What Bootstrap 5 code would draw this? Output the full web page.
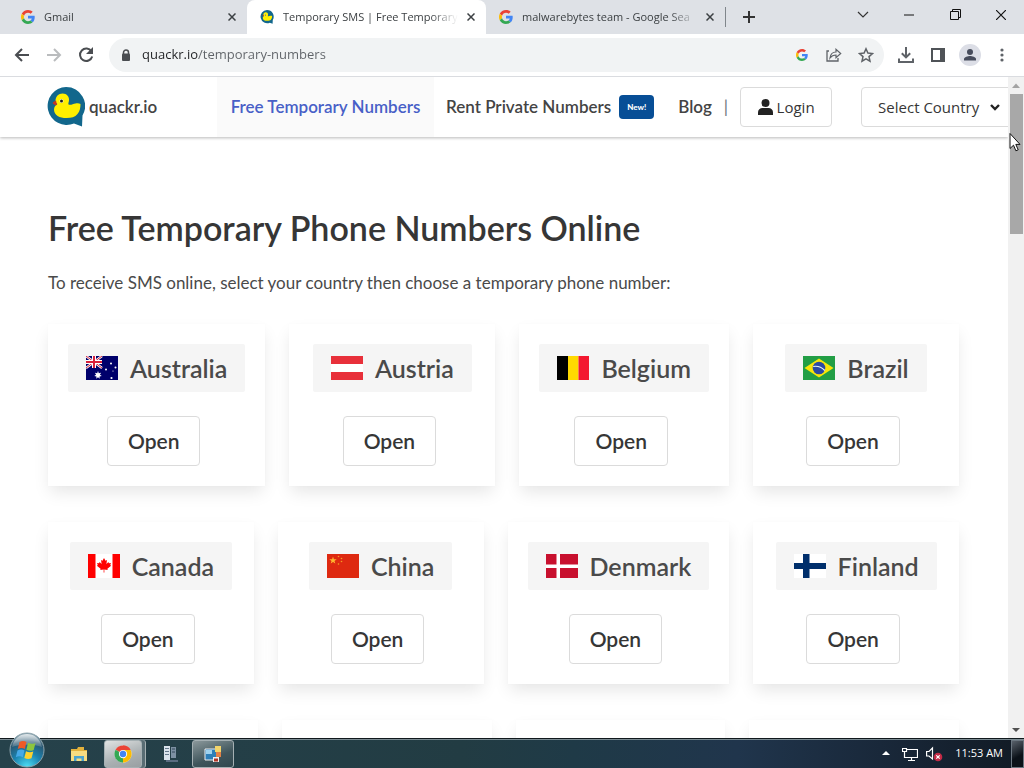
<!DOCTYPE html>
<html lang="en">
<head>
<meta charset="utf-8">
<meta name="viewport" content="width=device-width, initial-scale=1">
<title>Temporary SMS | Free Temporary Numbers</title>
<link href="https://cdn.jsdelivr.net/npm/bootstrap@5.3.0/dist/css/bootstrap.min.css" rel="stylesheet">
<style>
  :root { --ui: "Open Sans", "Noto Sans", sans-serif; --site: Lato, "Open Sans", sans-serif; }
  body { font-family: var(--ui); background: #fff; }
  button { font-family: inherit; }
  .plain { border: 0; background: none; padding: 0; display: flex; align-items: center; justify-content: center; flex: none; }

  /* browser tab strip */
  .tabstrip { background: #dee1e6; height: 34px; font-size: 11px; color: #3c4043; }
  .tab { flex: 0 1 239px; min-width: 0; padding: 0 11px 0 13px; gap: 9px; height: 34px; }
  .tab-on { background: #fff; border-radius: 8px 8px 0 0; }
  .tab-title { flex: 1 1 0; min-width: 0; overflow: hidden; white-space: nowrap; color: inherit; text-decoration: none;
    -webkit-mask-image: linear-gradient(90deg, #000 calc(100% - 28px), transparent); mask-image: linear-gradient(90deg, #000 calc(100% - 28px), transparent); }
  .tab-end { width: 1px; height: 20px; background: #80868b; }
  .win { width: 46px; height: 29px; }

  /* address bar */
  .toolbar { height: 43px; padding: 0 6px; border-bottom: 1px solid #dadce0; background: #fff; }
  .tool { width: 32px; height: 32px; }
  .omni { background: #f1f3f4; height: 34px; border-radius: 17px; margin: 0 6px 0 7px; padding: 0 2px 0 11px; }
  .omni input { flex: 1; min-width: 0; border: 0; outline: 0; padding: 0; margin-left: 10px; font-size: 13px;
    background: linear-gradient(90deg, #202124 56px, #5f6368 56px); -webkit-background-clip: text; background-clip: text; -webkit-text-fill-color: transparent; }

  /* site */
  .site { font-family: var(--site); color: #4a4a4a; }
  .site-head { height: 60px; padding-left: 47px; background: #fff; box-shadow: 0 1px 3px rgba(0,0,0,.28); font-size: 17px; font-weight: 600; white-space: nowrap; z-index: 2; }
  .site-head > * { flex: none; }
  .site-head a { color: #444; text-decoration: none; }
  .site-brand { width: 170px; gap: 4px; }
  .site-head a.nav-here { background: #fafafa; color: #485fc7; width: 217px; }
  .nav-new { background: #074e96; color: #fff; font-size: 8px; font-weight: 900; border-radius: 4px; width: 35px; height: 24px; }
  .box-btn { border: 1px solid #dbdbdb; border-radius: 4px; background-color: #fff; color: #363636; }
  .login { width: 92px; height: 40px; gap: 4px; font: 400 15px var(--ui); }
  .country { width: 166px; height: 40px; margin-left: 29px; padding: 0 0 0 16px; font: 400 15px var(--ui);
    --bs-form-select-bg-img: url("data:image/svg+xml,%3csvg xmlns='http://www.w3.org/2000/svg' viewBox='0 0 12 12'%3e%3cpath d='M2 4l4 4 4-4' fill='none' stroke='%23222' stroke-width='2.4'/%3e%3c/svg%3e");
    background-size: 12px 12px; background-position: right 25px center; }
  .site-main { padding: 68px 49px 0 48px; }
  .site-main h1 { font-size: 34px; line-height: 46px; font-weight: 600; color: #363636; margin: 0 0 19px; }
  .site-main p { font-size: 17px; line-height: 26px; margin: 0 0 28px; }
  .lands { gap: 24px; margin-bottom: 36px; }
  .land { flex: 1 1 0; padding: 20px; min-height: 162px; background: #fff; box-shadow: 0 8px 16px -2px rgba(10,10,10,.1), 0 0 1px rgba(10,10,10,.04); }
  .land h2 { background: #f5f5f5; width: fit-content; height: 48px; margin: 0 auto 24px; padding: 0 18px; gap: 12px; font-size: 25px; font-weight: 600; color: #4a4a4a; border-radius: 2px; }
  .flag { width: 32px; height: 24px; flex: none; }
  .open { height: 50px; margin-right: 6px; padding: 0 20px; font-size: 21px; font-weight: 600; line-height: 24px; }

  .scroll { width: 16px; flex: none; background: #f1f1f1; }
  .scroll svg { width: 16px; height: 17px; flex: none; }
  .thumb { width: 13px; height: 21.2%; background: #a8a8a8; }
  .pointer { top: 132px; right: 3px; z-index: 5; }

  /* taskbar */
  .taskbar { height: 30px; background: linear-gradient(90deg, #26424b 0, #223c43 45%, #1f3a47 56%, #20354c 72%, #19283a 86%, #111a24 100%); border-top: 1px solid #10191d; box-shadow: inset 0 1px #7b8b92; color: #fff; font-size: 11px; }
  .plain.orb { width: 54px; height: 29px; overflow: visible; align-items: flex-end; }
  .task { width: 42px; height: 28px; }
  .task-on { border: 1px solid #a5b0b3; border-radius: 3px; background: linear-gradient(160deg, #8b989b, #3f555b 60%, #31474e); }
  .task-front { background: linear-gradient(160deg, #e1e3e3, #a9b0b2 60%, #999fa2); box-shadow: 3px 0 #596d74, 4px 0 #a5b0b3; width: 38px; }
  .peek { width: 13px; height: 28px; border: 1px solid #6b7680; background: linear-gradient(150deg, #59616b, #0b1118 60%); }
</style>
</head>
<body class="vh-100 d-flex flex-column overflow-hidden position-relative">
<svg width="0" height="0" class="position-absolute" aria-hidden="true">
  <symbol id="g" viewBox="0 0 48 48"><path fill="#EA4335" d="M24 9.5c3.54 0 6.71 1.22 9.21 3.6l6.85-6.85C35.9 2.38 30.47 0 24 0 14.62 0 6.51 5.38 2.56 13.22l7.98 6.19C12.43 13.72 17.74 9.5 24 9.5z"/><path fill="#4285F4" d="M46.98 24.55c0-1.57-.15-3.09-.38-4.55H24v9.02h12.94c-.58 2.96-2.26 5.48-4.78 7.18l7.73 6c4.51-4.18 7.09-10.36 7.09-17.65z"/><path fill="#FBBC05" d="M10.53 28.59c-.48-1.45-.76-2.99-.76-4.59s.27-3.14.76-4.59l-7.98-6.19C.92 16.46 0 20.12 0 24c0 3.88.92 7.54 2.56 10.78l7.97-6.19z"/><path fill="#34A853" d="M24 48c6.48 0 11.93-2.13 15.89-5.81l-7.73-6c-2.15 1.45-4.92 2.3-8.16 2.3-6.26 0-11.57-4.22-13.47-9.91l-7.98 6.19C6.51 42.62 14.62 48 24 48z"/></symbol>
  <symbol id="duck" viewBox="0 0 38 40"><path fill="#12678c" d="M19 0a19 19 0 0 1 16.500 28.500L35 39.500 27 36.500A19 19 0 1 1 19 0z"/><path fill="#fff000" d="M8.500 14C8.500 9.500 11.500 6.500 15.500 6.500c4.500 0 7 3.500 6.500 7-.2 1.800-1 3-.5 4 2 1 4.500-.5 7-1 2.500-.4 4 0 5 .5 0 3.500-.5 7-3 10-2.500 3-6 4-11 4-7 0-12.500-2.500-12.500-8.500 0-2.500 1.500-4.500 3.500-5.500-1.300-.5-2-1.500-2-3z"/><path fill="#c33520" d="M9 13.500c-1.500.5-2.500 1.500-3.500 2.500 1 1.500 3 2.500 4.500 2z"/><circle cx="14.500" cy="14" r="2" fill="#f7f6da"/><circle cx="14.500" cy="14" r="1.500" fill="#222"/></symbol>
  <symbol id="x" viewBox="0 0 8 8"><path d="M.5.5l7 7M7.500.5l-7 7" stroke="#3c4043" stroke-width="1.500"/></symbol>
</svg>

<div class="tabstrip d-flex align-items-start ps-2 flex-shrink-0">
  <div class="tab d-flex align-items-center"><svg width="14" height="14"><use href="#g"/></svg><a class="tab-title" href="#">Gmail</a><button class="plain" aria-label="Close tab"><svg width="8" height="8"><use href="#x"/></svg></button></div>
  <div class="tab tab-on d-flex align-items-center"><svg width="14" height="14"><use href="#duck"/></svg><a class="tab-title" href="#">Temporary SMS | Free Temporary</a><button class="plain" aria-label="Close tab"><svg width="8" height="8"><use href="#x"/></svg></button></div>
  <div class="tab d-flex align-items-center"><svg width="14" height="14"><use href="#g"/></svg><a class="tab-title" href="#">malwarebytes team - Google Sea</a><button class="plain" aria-label="Close tab"><svg width="8" height="8"><use href="#x"/></svg></button></div>
  <span class="tab-end align-self-center"></span>
  <button class="plain win align-self-center" aria-label="New tab"><svg width="12" height="12"><path d="M6 0v12M0 6h12" stroke="#333" stroke-width="2"/></svg></button>
  <div class="d-flex ms-auto">
    <button class="plain win" aria-label="Search tabs"><svg width="12" height="8"><path d="M1 1l5 5 5-5" fill="none" stroke="#333" stroke-width="1.200"/></svg></button>
    <button class="plain win" aria-label="Minimise"><svg width="10" height="2"><path d="M0 1h10" stroke="#111"/></svg></button>
    <button class="plain win" aria-label="Restore"><svg width="11" height="11"><path d="M.5 2.500h8v8h-8zM2.500 2.500v-2h8v8h-2" fill="none" stroke="#111"/></svg></button>
    <button class="plain win" aria-label="Close"><svg width="10" height="10"><path d="M0 0l10 10M10 0L0 10" stroke="#111" stroke-width="1.200"/></svg></button>
  </div>
</div>

<div class="toolbar d-flex align-items-center flex-shrink-0">
  <button class="plain tool" aria-label="Back"><svg width="16" height="14"><path d="M15 7H2M8 1L2 7l6 6" fill="none" stroke="#4a4d51" stroke-width="2"/></svg></button>
  <button class="plain tool" aria-label="Forward"><svg width="16" height="14"><path d="M1 7h13M8 1l6 6-6 6" fill="none" stroke="#babcbe" stroke-width="2"/></svg></button>
  <button class="plain tool" aria-label="Reload"><svg width="16" height="16"><path d="M13.500 4.500A6.200 6.200 0 1 0 14.200 9.500" fill="none" stroke="#4a4d51" stroke-width="2"/><path d="M15 0v7H8z" fill="#4a4d51"/></svg></button>
  <div class="omni d-flex align-items-center flex-grow-1">
    <svg width="12" height="13" class="flex-shrink-0"><path d="M3.500 5V3.500a2.500 2.500 0 0 1 5 0V5" fill="none" stroke="#4a4d51" stroke-width="1.500"/><rect x="2" y="4.500" width="8" height="7.500" rx="1" fill="#4a4d51"/></svg>
    <input type="text" aria-label="Address" value="quackr.io/temporary-numbers">
    <button class="plain tool" aria-label="Search with Google"><svg width="12" height="12"><use href="#g"/></svg></button>
    <button class="plain tool" aria-label="Share"><svg width="16" height="14"><path d="M3 3H1v10h11v-3" fill="none" stroke="#5f6368" stroke-width="1.300"/><path d="M4 10c.5-4 3-6 6-6V1.300L14.700 5.500 10 9.700V7C7.500 7 5.500 8 4 10z" fill="none" stroke="#5f6368" stroke-width="1.200"/></svg></button>
    <button class="plain tool" aria-label="Bookmark"><svg width="16" height="16"><path d="M8 1.800l1.900 4.300 4.600.4-3.500 3.100 1 4.600L8 11.800l-4 2.400 1-4.600L1.500 6.500l4.600-.4z" fill="none" stroke="#5f6368" stroke-width="1.500"/></svg></button>
  </div>
  <button class="plain tool" aria-label="Downloads"><svg width="16" height="16"><path d="M8 0v10M3.800 6.200L8 10.400l4.200-4.200M1 11.500V15h14v-3.500" fill="none" stroke="#5f6368" stroke-width="2"/></svg></button>
  <button class="plain tool" aria-label="Side panel"><svg width="14" height="14"><path d="M1 1h12v12H1z" fill="none" stroke="#4f5357" stroke-width="2"/><path d="M9 1h4v12H9z" fill="#4f5357"/></svg></button>
  <button class="plain tool" aria-label="Profile"><svg width="22" height="22"><circle cx="11" cy="11" r="11" fill="#dcdee6"/><circle cx="11" cy="8" r="3" fill="#474c5c"/><path d="M5 16.500v-1.500c0-2 4-3 6-3s6 1 6 3v1.500z" fill="#474c5c"/></svg></button>
  <button class="plain tool" aria-label="Menu"><svg width="4" height="14"><g fill="#5f6368"><circle cx="2" cy="2" r="1.600"/><circle cx="2" cy="7" r="1.600"/><circle cx="2" cy="12" r="1.600"/></g></svg></button>
</div>

<div class="d-flex flex-grow-1 overflow-hidden">
  <div class="site flex-grow-1 overflow-hidden d-flex flex-column">
    <nav class="site-head d-flex align-items-center position-relative flex-shrink-0 overflow-visible">
      <a class="site-brand d-flex align-items-center" href="#"><svg width="38" height="40"><use href="#duck"/></svg>quackr.io</a>
      <a class="nav-here h-100 d-flex align-items-center justify-content-center" href="#">Free Temporary Numbers</a>
      <a class="ms-2 ps-1" href="#">Rent Private Numbers</a>
      <a href="#" class="nav-new d-flex align-items-center justify-content-center ms-2 me-4 text-white">New!</a>
      <a href="#">Blog</a>
      <span class="px-2 mx-1 fw-normal text-secondary">|</span>
      <button class="box-btn login d-flex align-items-center justify-content-center"><svg width="15" height="16"><circle cx="7.500" cy="4" r="4" fill="#222"/><path d="M0 16v-2.500C0 10.500 2 9 4.500 9h6c2.500 0 4.500 1.500 4.500 4.500V16z" fill="#222"/></svg>Login</button>
      <select class="form-select box-btn country" aria-label="Select Country"><option>Select Country</option></select>
    </nav>
    <main class="site-main">
      <h1>Free Temporary Phone Numbers Online</h1>
      <p>To receive SMS online, select your country then choose a temporary phone number:</p>
      <div class="lands d-flex">
        <section class="land"><h2 class="d-flex align-items-center"><svg class="flag" viewBox="0 0 32 24"><path fill="#00006b" d="M0 0h32v24H0z"/><path d="M0 0l16 12M16 0L0 12" stroke="#fff" stroke-width="2.400"/><path d="M0 0l16 12M16 0L0 12" stroke="#d8203a" stroke-width="1"/><path d="M8 0v12M0 6h16" stroke="#fff" stroke-width="4"/><path d="M8 0v12M0 6h16" stroke="#d8203a" stroke-width="2"/><path fill="#fff" d="M12 15l.8 2.200 2.300-.5-1.200 2 1.900 1.300-2.300.4.200 2.300-1.700-1.500-1.700 1.500.2-2.300-2.300-.4 1.900-1.300-1.200-2 2.300.5z"/><g fill="#fff"><circle cx="25" cy="7.500" r="1"/><circle cx="20" cy="13.500" r="1"/><circle cx="29.500" cy="11.500" r="1"/><circle cx="25.500" cy="22" r="1.100"/><circle cx="27" cy="15" r=".6"/></g></svg>Australia</h2><div class="text-center"><button class="box-btn open">Open</button></div></section>
        <section class="land"><h2 class="d-flex align-items-center"><svg class="flag" viewBox="0 0 32 24"><path fill="#fff" d="M0 0h32v24H0z"/><path fill="#e8303a" d="M0 0h32v8H0zM0 16h32v8H0z"/></svg>Austria</h2><div class="text-center"><button class="box-btn open">Open</button></div></section>
        <section class="land"><h2 class="d-flex align-items-center"><svg class="flag" viewBox="0 0 32 24"><path d="M0 0h11v24H0z"/><path fill="#ffd900" d="M11 0h10.500v24H11z"/><path fill="#f31830" d="M21.500 0H32v24H21.500z"/></svg>Belgium</h2><div class="text-center"><button class="box-btn open">Open</button></div></section>
        <section class="land"><h2 class="d-flex align-items-center"><svg class="flag" viewBox="0 0 32 24"><path fill="#229e45" d="M0 0h32v24H0z"/><path fill="#f8e509" d="M16 2.500L30.500 12 16 21.500 1.500 12z"/><circle cx="16" cy="12" r="6.300" fill="#2b49a3"/><path d="M10.200 10.500c4-.8 8.500.8 11.600 4" fill="none" stroke="#e8f4f8" stroke-width="1.200"/></svg>Brazil</h2><div class="text-center"><button class="box-btn open">Open</button></div></section>
      </div>
      <div class="lands d-flex">
        <section class="land"><h2 class="d-flex align-items-center"><svg class="flag" viewBox="0 0 32 24"><path fill="#fff" d="M0 0h32v24H0z"/><path fill="#f00" d="M0 0h7.500v24H0zM24.500 0H32v24h-7.500zM16 4l1.500 2.800 1.500-.8-.6 4 2-2 .5 1.200 2.100-.3-.8 2.200.9.700-3.700 3 .3 1.300-3.400-.5.100 3h-.8l.1-3-3.400.5.300-1.300-3.700-3 .9-.7-.8-2.200 2.100.3.500-1.200 2 2-.6-4 1.500.8z"/></svg>Canada</h2><div class="text-center"><button class="box-btn open">Open</button></div></section>
        <section class="land"><h2 class="d-flex align-items-center"><svg class="flag" viewBox="0 0 32 24"><path fill="#de2910" d="M0 0h32v24H0z"/><path fill="#ffb52e" d="M6 2.500l.9 2.700h2.800L7.500 6.900l.8 2.700L6 7.900 3.700 9.600l.8-2.700-2.200-1.700h2.800z"/><g fill="#f49a25"><circle cx="11.500" cy="2.500" r=".8"/><circle cx="14.500" cy="4.500" r=".8"/><circle cx="14.500" cy="7.500" r=".8"/><circle cx="11.500" cy="10" r=".8"/></g></svg>China</h2><div class="text-center"><button class="box-btn open">Open</button></div></section>
        <section class="land"><h2 class="d-flex align-items-center"><svg class="flag" viewBox="0 0 32 24"><path fill="#c8102e" d="M0 0h32v24H0z"/><path fill="#fff" d="M10.500 0H14v24h-3.500zM0 10.500h32V14H0z"/></svg>Denmark</h2><div class="text-center"><button class="box-btn open">Open</button></div></section>
        <section class="land"><h2 class="d-flex align-items-center"><svg class="flag" viewBox="0 0 32 24"><path fill="#fff" d="M0 0h32v24H0z"/><path fill="#002f6c" d="M9 0h6.500v24H9zM0 9h32v6H0z"/></svg>Finland</h2><div class="text-center"><button class="box-btn open">Open</button></div></section>
      </div>
      <div class="lands d-flex">
        <section class="land"></section><section class="land"></section><section class="land"></section><section class="land"></section>
      </div>
    </main>
  </div>
  <div class="scroll d-flex flex-column align-items-center">
    <svg><path d="M8 6.500l4 4.500H4z" fill="#a3a3a3"/></svg>
    <div class="thumb mb-auto"></div>
    <svg><path d="M8 11l4-4H4z" fill="#505050"/></svg>
  </div>
</div>
<svg class="pointer position-absolute" width="12" height="20"><path d="M1 1.500v15l3.500-3.300 2.400 5.600 2.300-1-2.400-5.400H11z" fill="#fff" stroke="#111"/></svg>

<footer class="taskbar d-flex align-items-center flex-shrink-0 position-relative">
  <button class="plain orb" aria-label="Start"><svg width="36" height="36" viewBox="0 0 36 36" class="flex-shrink-0"><defs><radialGradient id="ob" cx=".5" cy="1" r=".95"><stop offset="0" stop-color="#4fe0f5"/><stop offset=".45" stop-color="#1b83b0"/><stop offset=".8" stop-color="#2a5670"/><stop offset="1" stop-color="#7f9ba8"/></radialGradient><linearGradient id="sh" x2="0" y2="1"><stop offset="0" stop-color="#fff" stop-opacity=".75"/><stop offset="1" stop-color="#fff" stop-opacity=".15"/></linearGradient></defs><circle cx="18" cy="18" r="17" fill="url(#ob)" stroke="#8fa5ae"/><path d="M3 15C5 6 11 2 18 2s13 4 15 13c-8-3-22-3-30 0z" fill="url(#sh)"/><path d="M10.500 10c2.500-1.500 5-1.200 7 0l-1.700 7c-2-1.200-4.500-1.300-7 0z" fill="#ee5a26"/><path d="M19 10.700c2.500 1.400 5 1.400 7.500.2l-1.800 7c-2.500 1.200-5 1.100-7.300-.2z" fill="#8dc63f"/><path d="M8.500 18.500c2.500-1.300 5-1.200 7 0l-1.700 6.700c-2.200-1.200-4.600-1.200-7 0z" fill="#45a9e8"/><path d="M17 19.300c2.500 1.300 5 1.300 7.300.2l-1.800 6.700c-2.300 1.100-4.700 1-7.200-.2z" fill="#fdd22f"/></svg></button>
  <button class="plain task ms-1" aria-label="File Explorer"><svg width="18" height="18"><path d="M1 4h6l1-2h6v3h3v11H1z" fill="#e2b13c"/><path d="M1 6h16v10H1z" fill="#f7dc81"/><path d="M4 16v-5h10v5h-2.500v-2.500h-5V16z" fill="#4aa3cf"/></svg></button>
  <button class="plain task task-on task-front ms-1" aria-label="Chrome"><svg width="18" height="18" viewBox="0 0 48 48"><circle cx="24" cy="24" r="23" fill="#fff"/><path d="M24 24L4.100 12.500A23 23 0 0 1 43.900 12.500z" fill="#ea4335"/><path d="M24 24L43.900 12.500A23 23 0 0 1 24 47z" fill="#fbbc04"/><path d="M24 24L24 47A23 23 0 0 1 4.100 12.500z" fill="#34a853"/><path d="M24 13h20.200L34 29z" fill="#fbbc04"/><path d="M24 13h20.200A23 23 0 0 0 24 1z" fill="#ea4335"/><circle cx="24" cy="24" r="11" fill="#fff"/><circle cx="24" cy="24" r="8.500" fill="#4285f4"/></svg></button>
  <button class="plain task ms-2" aria-label="Server"><svg width="18" height="18"><path d="M2 1h6v14H2z" fill="#d9e3ec"/><path d="M3 3.500h4M3 6.500h4M3 9.500h4" stroke="#63788b"/><path d="M9 2h5v11H9z" fill="#7d91a3"/><path d="M10 4h3M10 7h3" stroke="#34485b"/><path d="M4 15h12v2H4z" fill="#5a6c80"/></svg></button>
  <button class="plain task task-on" aria-label="Application"><svg width="18" height="18"><path d="M1 4h12v11H1z" fill="#2e7fb8" stroke="#eee"/><path d="M2 5h6v4H2z" fill="#9fd2ee"/><path d="M11 1h6v6h-6z" fill="#f2d46b"/><path d="M12 7h5v5h-5z" fill="#e28147"/><path d="M9 12h6v5H9z" fill="#f1f1f1"/><path d="M10 13.500h4v3h-4z" fill="#b13526"/></svg></button>
  <div class="d-flex align-items-center ms-auto">
    <button class="plain me-2 pe-1" aria-label="Show hidden icons"><svg width="8" height="5"><path d="M4 0l4 4H0z" fill="#fff"/></svg></button>
    <svg width="16" height="14" class="me-2"><path d="M4 2.500h11.500v8H4M9.500 10.500v3M6 13.500h7M.5 1.500h4v3h-4zM2.500 4.500v6H5" fill="none" stroke="#fff" stroke-width="1.200"/></svg>
    <svg width="17" height="16" class="me-2"><path d="M.6 5.500h2.400L6.500 2v11L3 10H.6z" fill="none" stroke="#fff" stroke-width="1.200"/><circle cx="12" cy="11" r="4.300" fill="#c42b47"/><path d="M10.300 9.300l3.400 3.400M13.700 9.300l-3.400 3.400" stroke="#fff" stroke-width="1.200"/></svg>
    <time class="me-2 ms-1">11:53 AM</time>
    <button class="plain peek" aria-label="Show desktop"></button>
  </div>
</footer>
<script src="https://cdn.jsdelivr.net/npm/bootstrap@5.3.0/dist/js/bootstrap.bundle.min.js"></script>
</body>
</html>
